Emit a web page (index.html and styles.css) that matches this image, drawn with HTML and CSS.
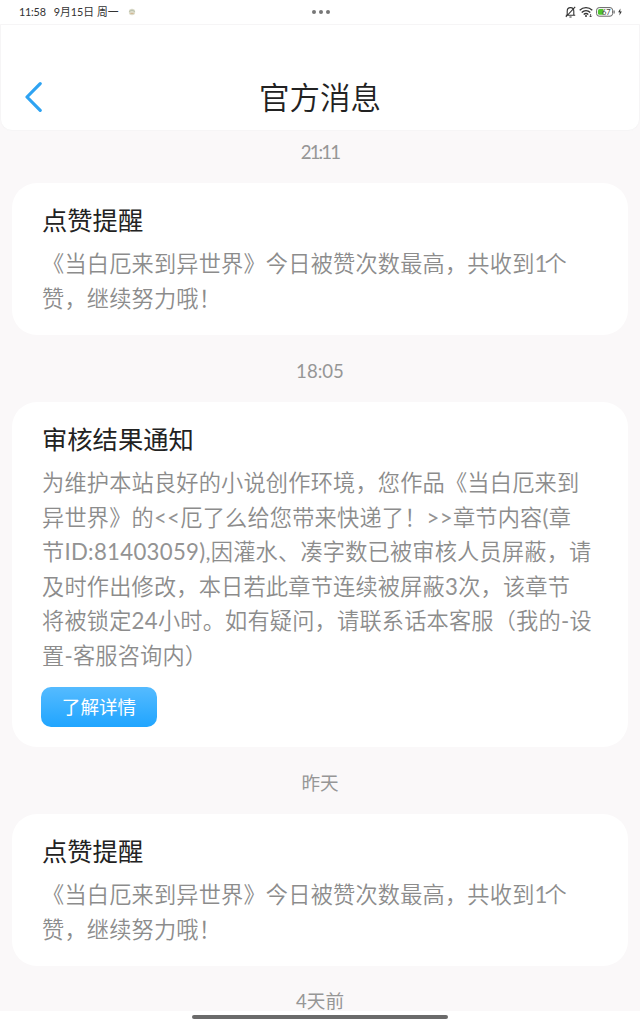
FILE: index.html
```html
<!DOCTYPE html>
<html lang="zh-CN">
<head>
    <meta charset="UTF-8">
    <meta name="viewport" content="width=device-width, initial-scale=1.0">
    <title>官方消息</title>
    <link rel="stylesheet" href="styles.css">
</head>
<body>
    <div class="status-bar">
        <div class="status-left">
            <span class="clock">11:58</span>
            <span class="date">9月15日 周一</span>
            <svg class="app-dot" width="8" height="8" viewBox="0 0 8 8">
                <circle cx="4" cy="4" r="3.2" fill="#dddccb"/>
                <path d="M1.2 3.5Q4 .6 6.8 3.5" fill="none" stroke="#b3bca8" stroke-width="1"/>
                <path d="M2.4 5.4H5.6" stroke="#d0b48f" stroke-width="1"/>
            </svg>
        </div>
        <div class="status-dots">
            <i></i><i></i><i></i>
        </div>
        <div class="status-right">
            <svg width="11" height="12" viewBox="0 0 11 12" fill="none" stroke="#333" stroke-width="1.1">
                <path d="M2.2 8.9V5.2C2.2 3 3.6 1.6 5.5 1.6S8.8 3 8.8 5.2V8.9M.8 9.2H10.2M4.4 11H6.6M10.2 .8L.8 11"/>
            </svg>
            <svg width="14" height="12" viewBox="0 0 14 12" fill="none" stroke="#333" stroke-width="1.3">
                <path d="M.7 4.2C4.3 .8 9.7 .8 13.3 4.2M2.7 6.4C5.2 4.2 8.8 4.2 11.3 6.4M4.7 8.5C6 7.4 8 7.4 9.3 8.5"/>
                <circle cx="7" cy="10" r="1" fill="#333" stroke="none"/>
                <path d="M11.6 8V11M10.4 9.8L11.6 11L12.8 9.8" stroke-width=".8"/>
            </svg>
            <svg width="19" height="10" viewBox="0 0 19 10">
                <rect x=".6" y=".6" width="16" height="8.6" rx="2.6" fill="#fff" stroke="#666" stroke-width="1"/>
                <path d="M3.6 2H7.4V7.8H3.6Q2 7.8 2 6.2V3.6Q2 2 3.6 2Z" fill="#4fc52e"/>
                <path d="M18.1 3.4V6.4" stroke="#666" stroke-width="1.2"/>
                <text class="battery-text" x="6" y="7.6">67</text>
            </svg>
            <svg width="4" height="8" viewBox="0 0 5 9">
                <path d="M3 0L.2 4.8H2.2L1.8 9L4.8 3.8H2.8Z" fill="#333"/>
            </svg>
        </div>
    </div>

    <header class="header">
        <a class="back" href="#">
            <svg width="18" height="32" viewBox="0 0 18 32" fill="none" stroke="#2ea3f2" stroke-width="3.2" stroke-linecap="round" stroke-linejoin="round">
                <path d="M16.2 2.6L3 16L16.2 29.4"/>
            </svg>
        </a>
        <h1>官方消息</h1>
    </header>

    <main class="messages">
        <div class="time"><span class="tight">21:11</span></div>
        <section class="card">
            <h2>点赞提醒</h2>
            <p>《当白厄来到异世界》今日被赞次数最高，共收到<span class="one">1</span>个<br>赞，继续努力哦！</p>
        </section>

        <div class="time">18:05</div>
        <section class="card">
            <h2>审核结果通知</h2>
            <p>为维护本站良好的小说创作环境，您作品《当白厄来到<br>异世界》的<span class="num">&lt;&lt;</span>厄了么给您带来快递了！<span class="num">&gt;&gt;</span>章节内容<span class="num">(</span>章<br>节<span class="num">ID:81403059),</span>因灌水、凑字数已被审核人员屏蔽，请<br>及时作出修改，本日若此章节连续被屏蔽<span class="num">3</span>次，该章节<br>将被锁定<span class="num">24</span>小时。如有疑问，请联系话本客服（我的<span class="num">-</span>设<br>置<span class="num">-</span>客服咨询内）</p>
            <a class="detail-button" href="#">了解详情</a>
        </section>

        <div class="time">昨天</div>
        <section class="card">
            <h2>点赞提醒</h2>
            <p>《当白厄来到异世界》今日被赞次数最高，共收到<span class="one">1</span>个<br>赞，继续努力哦！</p>
        </section>

        <div class="time">4天前</div>
    </main>

    <footer class="home-bar"><span></span></footer>
</body>
</html>
```

FILE: styles.css
```css
* {
    box-sizing: border-box;
}

body {
    margin: 0;
    height: 1024px;
    display: flex;
    flex-direction: column;
    background-color: #faf8f9;
    font-family: Lato, "Noto Sans CJK SC", sans-serif;
}

h1, h2, p {
    margin: 0;
    font-weight: normal;
}

/* status bar */
.status-bar {
    height: 24px;
    flex: none;
    display: grid;
    grid-template-columns: 1fr auto 1fr;
    align-items: center;
    padding: 0 18px 0 19px;
    background-color: #fff;
    color: #333;
    font-size: 10.8px;
    line-height: 24px;
}

.status-left {
    display: flex;
    align-items: center;
    white-space: nowrap;
}

.clock {
    letter-spacing: -0.2px;
}

.date {
    margin-left: 8px;
}

.app-dot {
    margin-left: 9px;
}

.status-dots {
    display: flex;
    gap: 3px;
}

.status-dots i {
    width: 4px;
    height: 4px;
    border-radius: 50%;
    background-color: #777;
}

.status-right {
    display: flex;
    align-items: center;
    justify-content: flex-end;
    gap: 3px;
}

.battery-text {
    font-size: 7.5px;
    fill: #444;
}

/* header */
.header {
    height: 107px;
    flex: none;
    display: grid;
    grid-template-columns: 60px 1fr 60px;
    align-items: center;
    padding-top: 38px;
    background-color: #fff;
    border: 1px solid #f6f5f6;
    border-radius: 0 0 12px 12px;
}

.back {
    display: flex;
    padding-left: 23px;
}

.header h1 {
    color: #222;
    font-size: 30.5px;
    font-weight: 350;
    line-height: 44px;
    text-align: center;
}

/* message list */
.messages {
    height: 880px;
    flex: none;
    padding: 0 12px;
}

.time {
    margin: 27px 0 22px;
    color: #969696;
    font-size: 18.6px;
    line-height: 18px;
    text-align: center;
}

.time:first-child {
    margin-top: 0;
    padding-top: 12px;
}

.time:last-child {
    margin: 26px 0 0;
}

.tight {
    letter-spacing: -1.9px;
}

.card {
    padding: 20px 30px 19px;
    background-color: #fff;
    border-radius: 25px;
}

.card h2 {
    margin-bottom: 10px;
    color: #222;
    font-size: 25.3px;
    line-height: 34px;
}

.card p {
    color: #8c8c8c;
    font-size: 22.2px;
    font-weight: 350;
    letter-spacing: 0.2px;
    line-height: 34.5px;
    white-space: nowrap;
}

/* latin runs sit a little heavier and wider than the hanzi */
.num {
    color: #939393;
    font-weight: 400;
    letter-spacing: 0.3px;
}

.one {
    color: #939393;
    font-weight: 400;
    letter-spacing: -3px;
}

.detail-button {
    display: block;
    width: 116px;
    height: 40px;
    margin: 14px 0 1px -1px;
    border-radius: 10px;
    background: linear-gradient(#55bbff, #20a5ff);
    color: #fff;
    font-size: 18.6px;
    line-height: 40px;
    text-align: center;
    text-decoration: none;
}

/* gesture bar */
.home-bar {
    flex: 1;
    display: flex;
    justify-content: center;
    align-items: flex-start;
    padding-top: 4px;
    background-color: #fff;
}

.home-bar span {
    width: 256px;
    height: 4px;
    border-radius: 2px;
    background-color: #6b6b6b;
}
```
